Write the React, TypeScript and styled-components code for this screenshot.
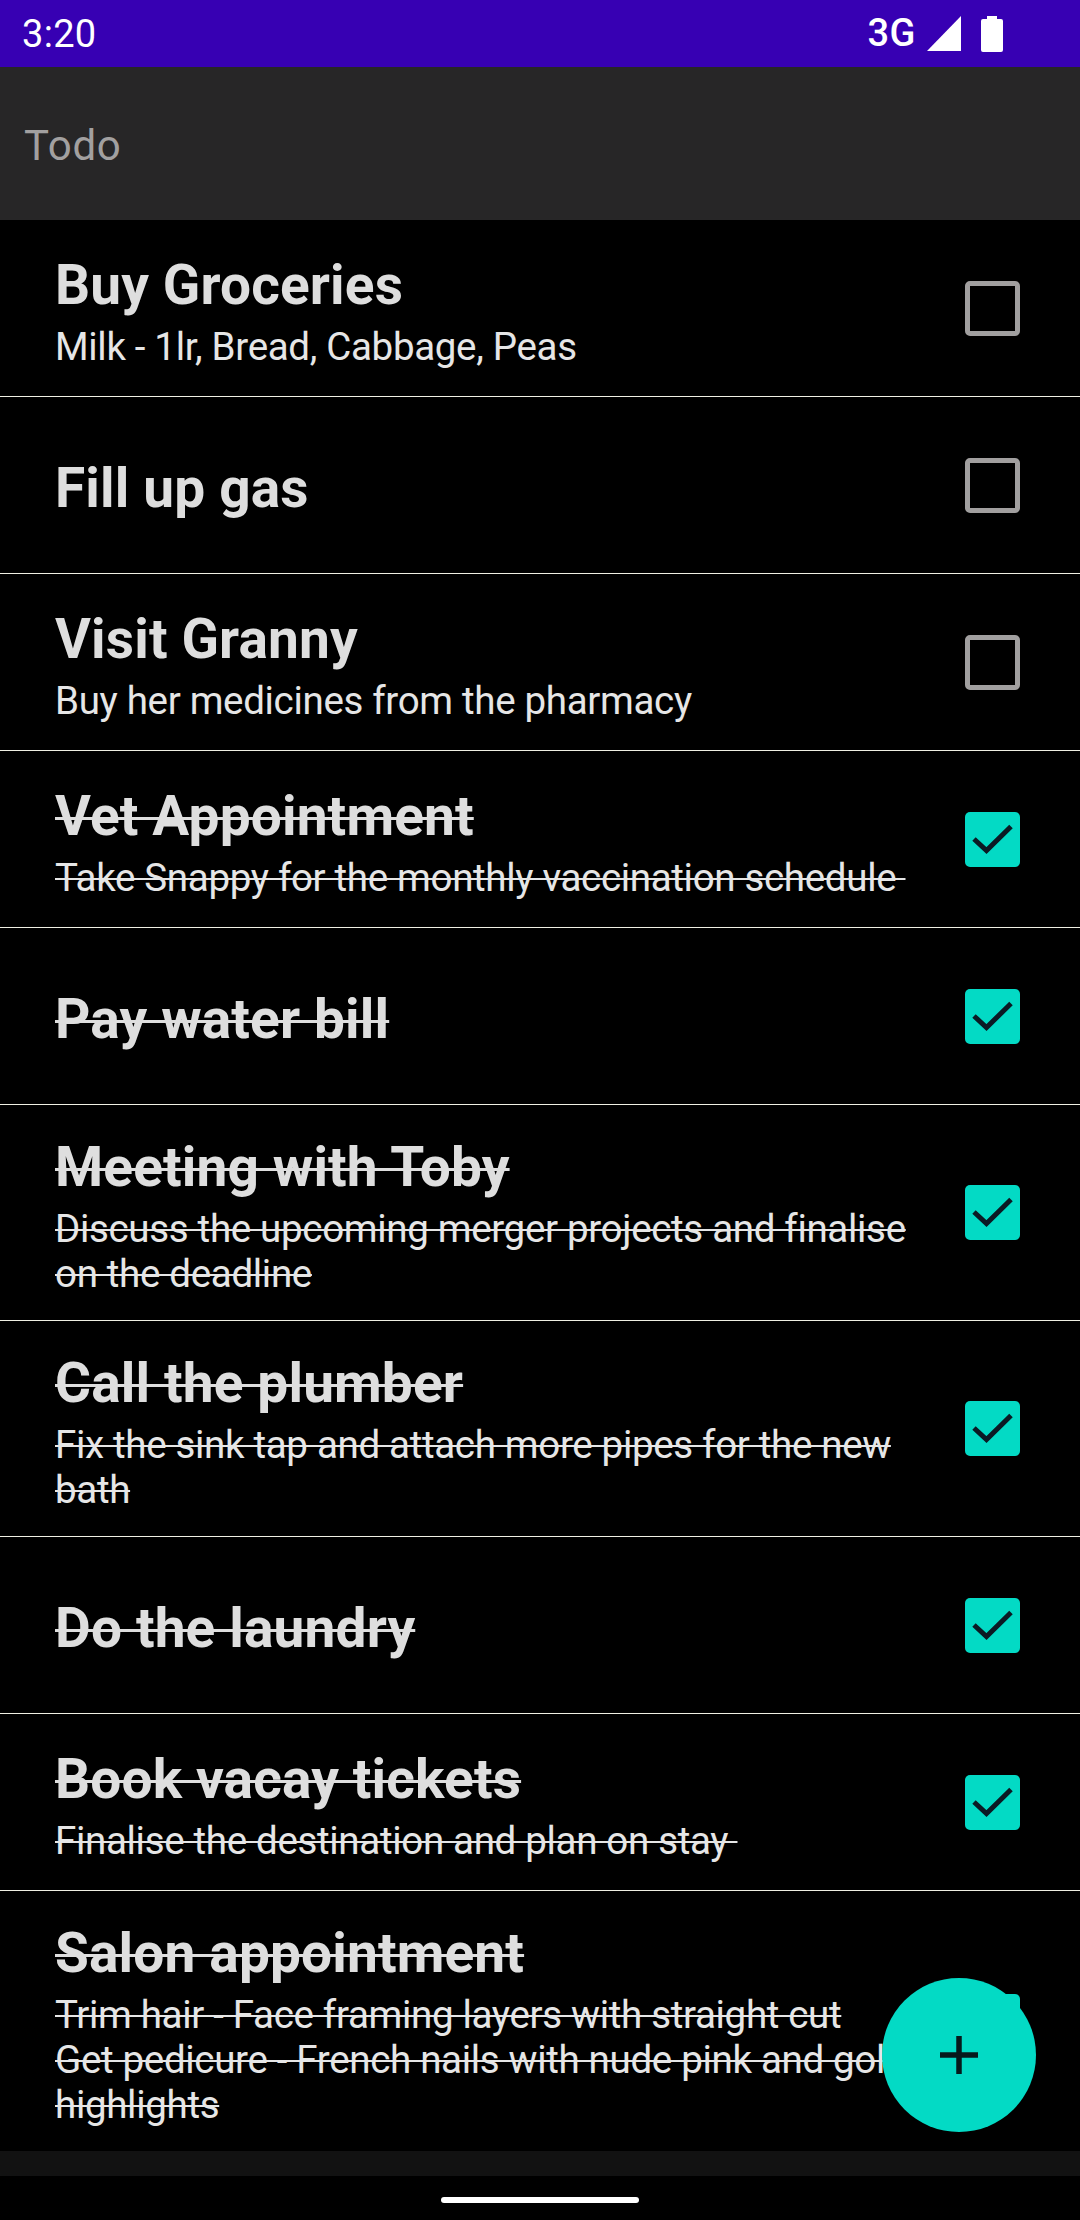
import React, { useState } from "react";
import styled, { createGlobalStyle } from "styled-components";

const GlobalStyle = createGlobalStyle`
  * { box-sizing: border-box; }
  body {
    margin: 0;
    background: #000;
    font-family: Roboto, "Liberation Sans", sans-serif;
  }
`;

const ACCENT = "#03dac5";

const Screen = styled.div`
  position: relative;
  display: flex;
  flex-direction: column;
  width: 1080px;
  height: 2220px;
  overflow: hidden;
  background: #000;
`;

const StatusBar = styled.header`
  display: flex;
  flex: none;
  align-items: center;
  justify-content: space-between;
  height: 67px;
  padding: 0 77px 0 22px;
  background: #3700b3;
  color: #fff;
`;

const Clock = styled.span`
  font-size: 38px;
  line-height: 44px;
  letter-spacing: 0.3px;
  padding-top: 1px;
`;

const Indicators = styled.div`
  display: flex;
  align-items: center;
`;

const Network = styled.span`
  font-size: 38px;
  line-height: 44px;
  font-weight: 500;
  letter-spacing: 0.5px;
  margin: 0 11px 2px 0;
`;

const Signal = styled.svg`
  width: 34px;
  height: 35px;
  margin-right: 20px;
`;

const Battery = styled.svg`
  width: 22px;
  height: 36px;
`;

const AppBar = styled.div`
  display: flex;
  flex: none;
  align-items: center;
  height: 153px;
  padding: 4px 24px 0;
  background: #272627;
`;

const AppTitle = styled.h1`
  margin: 0;
  color: #a2a0a0;
  font-size: 42px;
  line-height: 50px;
  font-weight: 400;
  letter-spacing: 0.7px;
`;

const TaskList = styled.ul`
  flex: none;
  margin: 0;
  padding: 0;
  list-style: none;
`;

const TaskRow = styled.li`
  display: flex;
  align-items: center;
  justify-content: space-between;
  box-sizing: content-box;
  min-height: 176px;
  padding: 0 60px 0 55px;
  border-bottom: 1px solid #f0f0e4;

  &:last-child {
    border-bottom: 0;
  }
`;

const TaskText = styled.div`
  width: 860px;
  padding: 30px 0 24px;
`;

const TaskTitle = styled.h2<{ $done: boolean }>`
  margin: 0;
  color: #dedede;
  font-size: 55px;
  line-height: 64px;
  font-weight: 700;
  letter-spacing: 0.15px;
  text-decoration-line: ${(p) => (p.$done ? "line-through" : "none")};
  text-decoration-thickness: 3px;
`;

const TaskNote = styled.p<{ $done: boolean }>`
  margin: 7px 0 0;
  color: #e6e6e6;
  font-size: 38.5px;
  line-height: 45px;
  letter-spacing: -0.32px;
  white-space: pre-line;
  text-decoration-line: ${(p) => (p.$done ? "line-through" : "none")};
  text-decoration-thickness: 2px;
`;

const CheckBox = styled.button<{ $checked: boolean }>`
  display: flex;
  flex: none;
  align-items: center;
  justify-content: center;
  width: 55px;
  height: 55px;
  padding: 0;
  border: ${(p) => (p.$checked ? "0" : "5px solid #a19f9f")};
  border-radius: 5px;
  background: ${(p) => (p.$checked ? ACCENT : "transparent")};
`;

const CheckMark = styled.svg`
  width: 55px;
  height: 55px;
`;

const BottomStrip = styled.div`
  flex: none;
  height: 25px;
  background: #121212;
`;

const NavigationBar = styled.nav`
  display: flex;
  flex: 1;
  align-items: center;
  justify-content: center;
`;

const HomePill = styled.div`
  width: 198px;
  height: 6px;
  margin-top: 4px;
  border-radius: 3px;
  background: #fff;
`;

const AddButton = styled.button`
  position: absolute;
  right: 44px;
  bottom: 88px;
  display: flex;
  align-items: center;
  justify-content: center;
  width: 154px;
  height: 154px;
  padding: 0;
  border: 0;
  border-radius: 50%;
  background: ${ACCENT};
`;

const PlusIcon = styled.svg`
  width: 38px;
  height: 38px;
`;

type Task = { title: string; note?: string; done: boolean };

const initialTasks: Task[] = [
  { title: "Buy Groceries", note: "Milk - 1lr, Bread, Cabbage, Peas", done: false },
  { title: "Fill up gas", done: false },
  { title: "Visit Granny", note: "Buy her medicines from the pharmacy", done: false },
  { title: "Vet Appointment", note: "Take Snappy for the monthly vaccination schedule\u00a0", done: true },
  { title: "Pay water bill", done: true },
  { title: "Meeting with Toby", note: "Discuss the upcoming merger projects and finalise on the deadline", done: true },
  { title: "Call the plumber", note: "Fix the sink tap and attach more pipes for the new bath", done: true },
  { title: "Do the laundry", done: true },
  { title: "Book vacay tickets", note: "Finalise the destination and plan on stay\u00a0", done: true },
  {
    title: "Salon appointment",
    note: "Trim hair - Face framing layers with straight cut\nGet pedicure - French nails with nude pink and gold highlights",
    done: true,
  },
];

export default function App() {
  const [tasks, setTasks] = useState(initialTasks);

  const toggle = (index: number) =>
    setTasks((list) => list.map((t, i) => (i === index ? { ...t, done: !t.done } : t)));

  return (
    <>
      <GlobalStyle />
      <Screen>
        <StatusBar>
          <Clock>3:20</Clock>
          <Indicators>
            <Network>3G</Network>
            <Signal viewBox="0 0 34 35">
              <path d="M34 0V35H0Z" fill="#fff" />
            </Signal>
            <Battery viewBox="0 0 22 36">
              <path d="M6 0H16V3H20Q22 3 22 5V34Q22 36 20 36H2Q0 36 0 34V5Q0 3 2 3H6Z" fill="#fff" />
            </Battery>
          </Indicators>
        </StatusBar>
        <AppBar>
          <AppTitle>Todo</AppTitle>
        </AppBar>
        <TaskList>
          {tasks.map((task, index) => (
            <TaskRow key={task.title}>
              <TaskText>
                <TaskTitle $done={task.done}>{task.title}</TaskTitle>
                {task.note && <TaskNote $done={task.done}>{task.note}</TaskNote>}
              </TaskText>
              <CheckBox
                type="button"
                role="checkbox"
                aria-checked={task.done}
                $checked={task.done}
                onClick={() => toggle(index)}
              >
                {task.done && (
                  <CheckMark viewBox="0 0 55 55" fill="none" stroke="#0b1a24" strokeWidth="5">
                    <path d="M9 27L21.5 38.5L46 14.5" />
                  </CheckMark>
                )}
              </CheckBox>
            </TaskRow>
          ))}
        </TaskList>
        <BottomStrip />
        <NavigationBar>
          <HomePill />
        </NavigationBar>
        <AddButton type="button" aria-label="Add">
          <PlusIcon viewBox="0 0 38 38" stroke="#071a1c" strokeWidth="5.5">
            <path d="M19 0V38M0 19H38" />
          </PlusIcon>
        </AddButton>
      </Screen>
    </>
  );
}
